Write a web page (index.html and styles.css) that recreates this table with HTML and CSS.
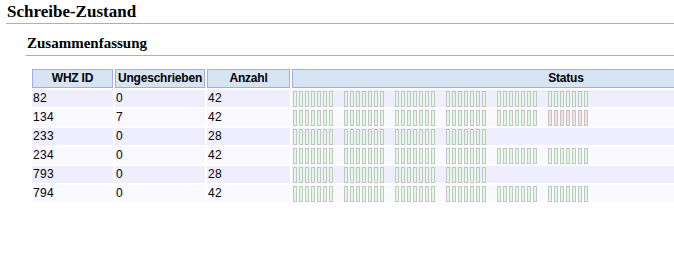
FILE: index.html
```html
<!DOCTYPE html>
<html lang="de">
<head>
<meta charset="utf-8">
<title>Schreibe-Zustand</title>
<link rel="stylesheet" href="styles.css">
</head>
<body>
<div class="page">
  <h1 class="title">Schreibe-Zustand</h1>
  <div class="section">
    <h2 class="subtitle">Zusammenfassung</h2>
    <table class="summary">
      <colgroup>
        <col class="c-id"><col class="c-un"><col class="c-an"><col class="c-st">
      </colgroup>
      <thead>
        <tr><th>WHZ ID</th><th>Ungeschrieben</th><th>Anzahl</th><th>Status</th></tr>
      </thead>
      <tbody id="rows"></tbody>
    </table>
  </div>
</div>
<script>
  var data = [
    ["82", 0, 42], ["134", 7, 42], ["233", 0, 28],
    ["234", 0, 42], ["793", 0, 28], ["794", 0, 42]
  ];
  var tb = document.getElementById("rows");
  data.forEach(function (r, i) {
    var tr = document.createElement("tr");
    tr.className = i % 2 === 0 ? "odd" : "even";
    var html = "<td>" + r[0] + "</td><td>" + r[1] + "</td><td>" + r[2] + "</td><td class=\"st\"><div class=\"groups\">";
    var total = r[2], bad = r[1];
    for (var g = 0; g < total / 7; g++) {
      html += "<div class=\"grp\">";
      for (var b = 0; b < 7; b++) {
        var idx = g * 7 + b;
        html += "<span class=\"box" + (idx >= total - bad ? " bad" : "") + "\"></span>";
      }
      html += "</div>";
    }
    html += "</div></td>";
    tr.innerHTML = html;
    tb.appendChild(tr);
  });
</script>
</body>
</html>
```

FILE: styles.css
```css
html, body {
  margin: 0;
  padding: 0;
  background: #ffffff;
}

.page {
  width: 674px;
  overflow: hidden;
  font-family: "Liberation Sans", Arial, sans-serif;
  color: #000;
}

.title {
  margin: 0 0 0 6px;
  padding: 2px 0 1px 1px;
  font-family: "Liberation Serif", "Times New Roman", serif;
  font-size: 17px;
  line-height: 20px;
  font-weight: bold;
  border-bottom: 1px solid #a8a8e8;
}

.section {
  padding-left: 26px;
}

.subtitle {
  margin: 10px 0 0 0;
  padding: 0 0 3px 1px;
  font-family: "Liberation Serif", "Times New Roman", serif;
  font-size: 15px;
  line-height: 18px;
  font-weight: bold;
  border-bottom: 1px solid #a8a8e8;
}

.summary {
  margin: 11px 0 0 4px;
  width: 812px;
  table-layout: fixed;
  border-collapse: separate;
  border-spacing: 2px;
  font-size: 12px;
}

.c-id { width: 81px; }
.c-un { width: 90px; }
.c-an { width: 83px; }

.summary th {
  box-sizing: border-box;
  height: 19px;
  padding: 0;
  line-height: 17px;
  background: #d6e4f4;
  border: 1px solid #a8a8f0;
  font-weight: bold;
  letter-spacing: -0.2px;
  text-align: center;
  white-space: nowrap;
}

.summary td {
  box-sizing: border-box;
  height: 17px;
  padding: 0 1px;
  line-height: 17px;
  text-align: left;
  white-space: nowrap;
  letter-spacing: 0.3px;
}

.summary tr.odd td { background: #eeeeff; }
.summary tr.even td { background: #f9f9ff; }

.summary td.st {
  padding: 1px 0 0 1px;
  line-height: 0;
  vertical-align: top;
}

.groups {
  display: flex;
  gap: 11px;
}

.grp {
  display: flex;
  gap: 2px;
}

.box {
  display: block;
  box-sizing: border-box;
  width: 4px;
  height: 16px;
  border: 1px solid #c4c4c4;
  background: #dcfddc;
}

.box.bad {
  background: #fcdcdc;
}
```
